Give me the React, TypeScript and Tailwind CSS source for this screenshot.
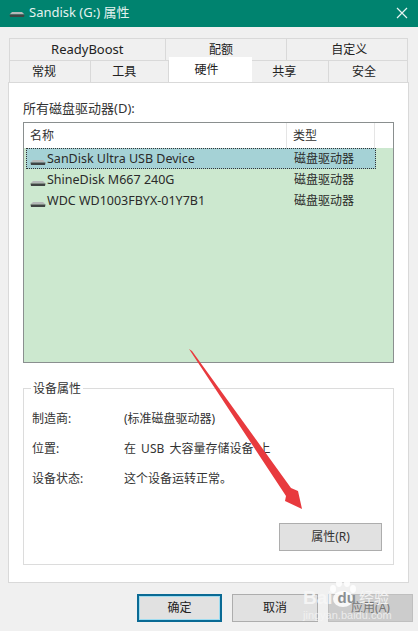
const FONT = "font-['Noto_Sans','Noto_Sans_CJK_SC',sans-serif]";

function DriveIcon({ className }: { className?: string }) {
  return (
    <svg className={className} width="16" height="10" viewBox="0 0 16 10">
      <path d="M3 4 L13 4 L15.5 6.5 L0.5 6.5 Z" fill="#b4b8b8" />
      <path d="M0.5 6.5 L15.5 6.5 L15 9 L1 9 Z" fill="#3f4443" />
    </svg>
  );
}

function Tab({ label, className }: { label: string; className: string }) {
  return (
    <div className={`flex items-center justify-center border-t border-r border-[#d9d9d9] bg-[#f0f0f0] text-[#222] ${className}`}>
      {label}
    </div>
  );
}

function DriveRow({ name, selected }: { name: string; selected?: boolean }) {
  return (
    <div
      className={`ml-[2px] flex h-[21px] w-[350px] items-center border pt-[1px] ${
        selected ? "border-dotted border-[#333] bg-[#a5d2d6]" : "border-transparent"
      }`}
    >
      <DriveIcon className="ml-[3px] mt-[3px] shrink-0" />
      <span className="ml-[1px] w-[247px] whitespace-nowrap text-[12.5px] text-[#2a2a2a]">{name}</span>
      <span className="whitespace-nowrap text-[#2a2a2a]">磁盘驱动器</span>
    </div>
  );
}

function InfoRow({ label, value }: { label: string; value: string }) {
  return (
    <div className="flex h-[30px] items-center text-[#333]">
      <span className="w-[92px] shrink-0">{label}</span>
      <span className="whitespace-nowrap [word-spacing:2px]">{value}</span>
    </div>
  );
}

export default function App() {
  return (
    <div className={`relative flex h-[631px] w-[418px] flex-col overflow-hidden bg-[#f0f0f0] text-[12px] ${FONT}`}>
      <div className="flex h-[27px] shrink-0 items-center bg-[#00836f] pb-[2px] text-white">
        <DriveIcon className="ml-[9px]" />
        <span className="ml-[4px] text-[13px] text-[#e4f2ef]">Sandisk (G:) 属性</span>
        <svg className="ml-auto mr-[10px]" width="12" height="12" viewBox="0 0 12 12">
          <path d="M1 1 L11 11 M11 1 L1 11" stroke="#e8f4f2" strokeWidth="1.2" />
        </svg>
      </div>

      <div className="ml-[9px] mt-[11px] flex h-[22px] w-[399px] shrink-0 border-l border-[#d9d9d9]">
        <Tab label="ReadyBoost" className="w-[156px] text-[13px]" />
        <Tab label="配额" className="w-[122px] pr-[10px]" />
        <Tab label="自定义" className="w-[121px] pl-[4px]" />
      </div>
      <div className="ml-[9px] flex h-[22px] w-[399px] shrink-0 items-end border-l border-[#d9d9d9]">
        <Tab label="常规" className="h-[22px] w-[81px] pr-[12px]" />
        <Tab label="工具" className="h-[22px] w-[78px] pr-[10px]" />
        <div className="relative z-10 flex h-[25px] w-[84px] items-center justify-center bg-white pr-[8px] text-[#222]">硬件</div>
        <Tab label="共享" className="h-[22px] w-[77px] pr-[12px]" />
        <Tab label="安全" className="h-[22px] w-[79px] pr-[8px]" />
      </div>

      <div className="ml-[8px] flex h-[501px] w-[401px] shrink-0 flex-col border border-[#d9d9d9] bg-white px-[14px]">
        <div className="mt-[15px] h-[24px] text-[13px] leading-[20px] text-[#333]">所有磁盘驱动器(D):</div>

        <div className="flex h-[241px] flex-col border border-[#8a8f8f] bg-[#cce8cf]">
          <div className="flex h-[25px] shrink-0 items-center bg-white text-[#333]">
            <span className="w-[263px] border-r border-[#e5e5e5] pl-[6px] leading-[25px]">名称</span>
            <span className="w-[88px] border-r border-[#e5e5e5] pl-[6px] leading-[25px]">类型</span>
          </div>
          <DriveRow name="SanDisk Ultra USB Device" selected />
          <DriveRow name="ShineDisk M667 240G" />
          <DriveRow name="WDC WD1003FBYX-01Y7B1" />
        </div>

        <div className="relative mt-[25px] flex h-[177px] flex-col border border-[#dcdcdc] px-[8px] pt-[15px]">
          <span className="absolute -top-[9px] left-[7px] bg-white px-[2px] leading-[18px] text-[#333]">设备属性</span>
          <InfoRow label="制造商:" value="(标准磁盘驱动器)" />
          <InfoRow label="位置:" value="在 USB 大容量存储设备 上" />
          <InfoRow label="设备状态:" value="这个设备运转正常。" />
          <div className="mt-auto mb-[13px] mr-[3px] flex justify-end">
            <button className="h-[28px] w-[103px] border border-[#adadad] bg-[#e1e1e1] text-[#333]">属性(R)</button>
          </div>
        </div>
      </div>

      <div className="ml-[137px] mt-[11px] flex gap-[10px]">
        <button className="h-[28px] w-[85px] border-2 border-[#0a6a94] bg-[#e1e1e1] text-[#222] outline outline-1 -outline-offset-3 outline-[#9fdcf0]">确定</button>
        <button className="h-[28px] w-[86px] border border-[#adadad] bg-[#e1e1e1] text-[#222]">取消</button>
        <button className="h-[28px] w-[85px] border border-[#bfbfbf] bg-[#cccccc] text-[#777]">应用(A)</button>
      </div>

      {/* red arrow drawn over the dialog */}
      <svg className="pointer-events-none absolute left-0 top-0" width="418" height="631" viewBox="0 0 418 631">
        <path d="M189 349 L192 351 L291 488 L298 491 L302 509 L285 501 L286 496 Z" fill="#e83a3e" />
      </svg>

      {/* baidu watermark */}
      <div className="pointer-events-none absolute left-[300px] top-[574px] flex w-[118px] flex-col text-[#f7f7f7]">
        <svg className="absolute left-[24px] top-[2px]" width="38" height="32" viewBox="0 0 38 32">
          <g fill="#ffffff" fillOpacity="0.85">
            <ellipse cx="9" cy="13" rx="3" ry="4" />
            <ellipse cx="15" cy="7" rx="3" ry="4" />
            <ellipse cx="23" cy="7" rx="3" ry="4" />
            <ellipse cx="29" cy="13" rx="3" ry="4" />
            <ellipse cx="19" cy="23" rx="10" ry="8" />
          </g>
        </svg>
        <div className="relative mt-[14px] flex items-center pl-[3px] font-['Liberation_Sans','Noto_Sans_CJK_SC',sans-serif] text-[19px] font-bold leading-[20px]">
          <span className="opacity-90">Bai</span>
          <span className="ml-[5px] text-[15px] text-[#8a8f92]">du</span>
          <span className="ml-[3px] text-[15px] font-normal opacity-90">经验</span>
        </div>
        <span className="relative pl-[3px] font-['Liberation_Sans',sans-serif] text-[11px] leading-[14px] opacity-75">jingyan.baidu.com</span>
      </div>
    </div>
  );
}
